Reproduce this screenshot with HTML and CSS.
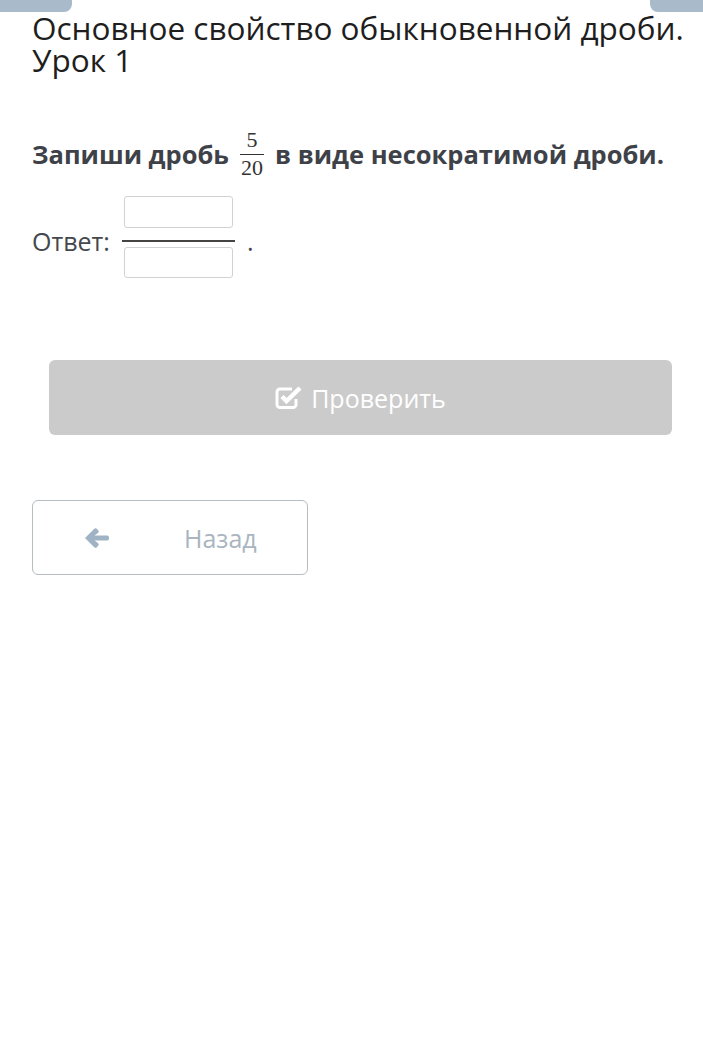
FILE: index.html
```html
<!DOCTYPE html>
<html lang="ru">
<head>
    <meta charset="UTF-8">
    <meta name="viewport" content="width=device-width, initial-scale=1.0">
    <title>Основное свойство обыкновенной дроби</title>
    <link rel="stylesheet" href="styles.css">
</head>
<body>
    <div class="tabs">
        <span class="tab tab-left"></span>
        <span class="tab tab-right"></span>
    </div>

    <h1 class="title">Основное свойство обыкновенной дроби. Урок 1</h1>

    <p class="task">
        Запиши дробь
        <span class="frac">
            <span class="frac-num">5</span>
            <span class="frac-den">20</span>
        </span>
        в виде несократимой дроби.
    </p>

    <div class="answer">
        <span class="answer-label">Ответ:</span>
        <span class="answer-frac">
            <input class="answer-box" type="text">
            <span class="answer-line"></span>
            <input class="answer-box answer-box-low" type="text">
        </span>
        <span class="answer-dot">.</span>
    </div>

    <button class="check-btn" disabled>
        <svg class="check-icon" width="27" height="24" viewBox="0 0 27 24">
            <path d="M21 13v5.5a3 3 0 0 1-3 3H5a3 3 0 0 1-3-3V6a3 3 0 0 1 3-3h12" fill="none" stroke="#fff" stroke-width="3"/>
            <path d="M7 10.5l4.5 4.5L25 2" fill="none" stroke="#fff" stroke-width="4.5"/>
        </svg>
        Проверить
    </button>

    <button class="back-btn">
        <svg class="back-icon" width="26" height="22" viewBox="0 0 26 22">
            <path d="M1 11L10 2a2 2 0 0 1 3 0l1 1a2 2 0 0 1 0 3L10.5 8.5H23a2 2 0 0 1 2 2v1a2 2 0 0 1-2 2H10.5L14 16a2 2 0 0 1 0 3l-1 1a2 2 0 0 1-3 0z" fill="#9fb3c4"/>
        </svg>
        <span class="back-text">Назад</span>
    </button>
</body>
</html>
```

FILE: styles.css
```css
body {
    margin: 0;
    padding: 0 10px 0 32px;
    font-family: "Open Sans", sans-serif;
    background: #fff;
    color: #222;
}
.tabs {
    display: flex;
    justify-content: space-between;
    margin: 0 -10px 0 -32px;
    height: 12px;
}
.tab {
    display: block;
    height: 12px;
    background-color: #a9bbca;
}
.tab-left {
    width: 72px;
    border-radius: 0 0 8px 0;
}
.tab-right {
    width: 53px;
    border-radius: 0 0 0 8px;
}
.title {
    font-weight: 400;
    font-size: 31.5px;
    line-height: 32px;
    margin: 0;
    color: #1e1e1e;
}
.task {
    margin: 54px 0 0;
    font-size: 25.5px;
    font-weight: 700;
    color: #3e4248;
    display: flex;
    align-items: center;
    gap: 12px;
}
.frac {
    display: inline-flex;
    flex-direction: column;
    align-items: center;
    font-family: "Liberation Serif", serif;
    font-weight: 400;
    font-size: 22px;
    line-height: 20px;
    color: #333;
}
.frac-num {
    border-bottom: 1px solid #333;
    padding: 0 1px 4px;
    width: 100%;
    text-align: center;
}
.frac-den {
    padding-top: 3px;
}
.answer {
    display: flex;
    align-items: center;
    margin-top: 18px;
    font-size: 25px;
    color: #44484e;
}
.answer-label {
    margin-right: 12px;
    padding-top: 8px;
}
.answer-frac {
    display: inline-flex;
    flex-direction: column;
    align-items: center;
}
.answer-box {
    width: 109px;
    height: 32px;
    box-sizing: border-box;
    border: 1px solid #cfd3d6;
    border-radius: 3px;
    margin: 0 0 12px;
}
.answer-box-low {
    height: 31px;
    margin: 5px 0 0;
}
.answer-line {
    display: block;
    width: 113px;
    height: 2px;
    background-color: #444;
}
.answer-dot {
    margin-left: 12px;
    padding-top: 8px;
}
.check-btn {
    display: flex;
    align-items: center;
    justify-content: center;
    gap: 9px;
    width: 623px;
    height: 75px;
    margin: 82px 0 0 17px;
    background-color: #cbcbcb;
    border: none;
    border-radius: 6px;
    color: #fff;
    font-family: "Open Sans", sans-serif;
    font-size: 25px;
}
.back-btn {
    display: flex;
    align-items: center;
    width: 276px;
    height: 75px;
    margin-top: 65px;
    padding: 0 0 0 51px;
    background-color: #fff;
    border: 1px solid #b7bcc0;
    border-radius: 6px;
    font-family: "Open Sans", sans-serif;
    font-size: 25px;
    color: #a9b5c0;
}
.back-text {
    margin-left: 74px;
}
```
